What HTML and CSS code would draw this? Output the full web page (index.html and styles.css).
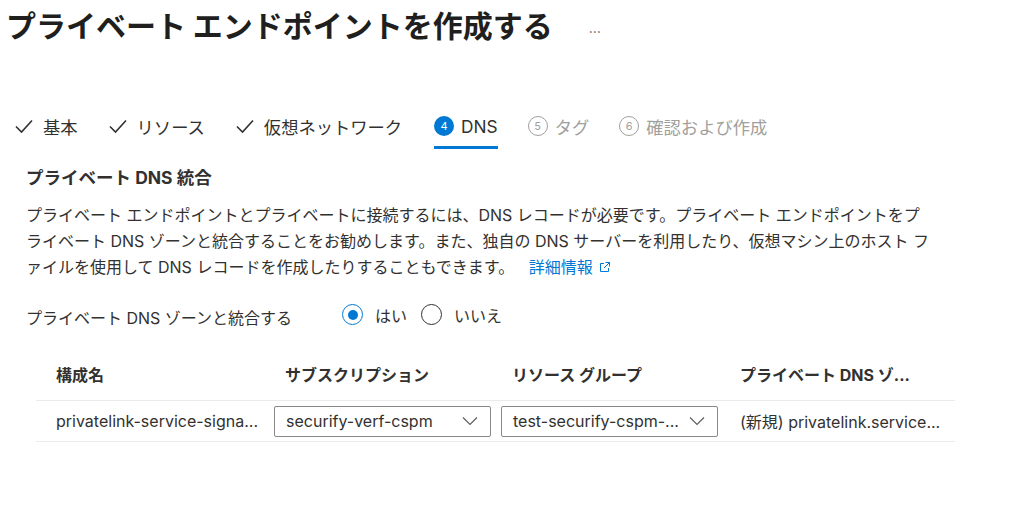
FILE: index.html
```html
<!DOCTYPE html>
<html lang="ja">
<head>
    <meta charset="UTF-8">
    <meta name="viewport" content="width=device-width, initial-scale=1.0">
    <title>プライベート エンドポイントを作成する</title>
    <link rel="stylesheet" href="styles.css">
</head>
<body>
    <div class="header">
        <h1>プライベート エンドポイントを作成する</h1>
        <span class="more">…</span>
    </div>

    <div class="tabs">
        <div class="tab done">
            <svg class="check" viewBox="0 0 20 20"><path d="M2 10.5 L7.5 16 L18 4.5" /></svg>
            <span>基本</span>
        </div>
        <div class="tab done">
            <svg class="check" viewBox="0 0 20 20"><path d="M2 10.5 L7.5 16 L18 4.5" /></svg>
            <span>リソース</span>
        </div>
        <div class="tab done">
            <svg class="check" viewBox="0 0 20 20"><path d="M2 10.5 L7.5 16 L18 4.5" /></svg>
            <span>仮想ネットワーク</span>
        </div>
        <div class="tab active">
            <span class="num">4</span>
            <span>DNS</span>
        </div>
        <div class="tab disabled">
            <span class="num">5</span>
            <span>タグ</span>
        </div>
        <div class="tab disabled">
            <span class="num">6</span>
            <span>確認および作成</span>
        </div>
    </div>

    <div class="section">
        <h2>プライベート DNS 統合</h2>
        <p class="desc">
            プライベート エンドポイントとプライベートに接続するには、DNS レコードが必要です。プライベート エンドポイントをプ<br>
            ライベート DNS ゾーンと統合することをお勧めします。また、独自の DNS サーバーを利用したり、仮想マシン上のホスト フ<br>
            ァイルを使用して DNS レコードを作成したりすることもできます。
            <a class="link" href="#">詳細情報
                <svg class="ext" viewBox="0 0 12 12"><path d="M5 2.5 H1.5 V10.5 H9.5 V7" /><path d="M6.5 1.5 H10.5 V5.5 M10.5 1.5 L5 7" /></svg>
            </a>
        </p>

        <div class="field">
            <span class="label">プライベート DNS ゾーンと統合する</span>
            <div class="radios">
                <label class="radio checked"><span class="dot"></span>はい</label>
                <label class="radio"><span class="dot"></span>いいえ</label>
            </div>
        </div>

        <div class="table">
            <div class="th first">構成名</div>
            <div class="th pad">サブスクリプション</div>
            <div class="th pad">リソース グループ</div>
            <div class="th last">プライベート DNS ゾ...</div>

            <div class="td first">privatelink-service-signa...</div>
            <div class="td">
                <div class="select">
                    <span>securify-verf-cspm</span>
                    <svg class="chev" viewBox="0 0 16 10"><path d="M1 1.5 L8 8.5 L15 1.5" /></svg>
                </div>
            </div>
            <div class="td">
                <div class="select">
                    <span>test-securify-cspm-...</span>
                    <svg class="chev" viewBox="0 0 16 10"><path d="M1 1.5 L8 8.5 L15 1.5" /></svg>
                </div>
            </div>
            <div class="td last">(新規) privatelink.service...</div>
        </div>
    </div>
</body>
</html>
```

FILE: styles.css
```css
body {
    font-family: Inter, "Noto Sans CJK JP", sans-serif;
    color: #323130;
    background: #fff;
    margin: 0;
    padding: 0;
}
.header {
    display: flex;
    align-items: center;
    height: 48px;
    padding-left: 6px;
}
h1 {
    font-family: "Noto Sans CJK JP", sans-serif;
    font-size: 30px;
    font-weight: 700;
    margin: 0;
    color: #201f1e;
}
.more {
    margin-left: 36px;
    font-size: 14px;
    color: #605e5c;
    padding-top: 6px;
}
.tabs {
    display: flex;
    align-items: stretch;
    margin-top: 58px;
    padding-left: 14px;
    gap: 30px;
}
.tab {
    display: flex;
    align-items: center;
    gap: 6px;
    height: 43px;
    font-size: 17.3px;
    border-bottom: 3px solid transparent;
    box-sizing: border-box;
}
.tab .check {
    width: 20px;
    height: 20px;
    margin-right: 3px;
}
.check path {
    fill: none;
    stroke: #323130;
    stroke-width: 1.6;
}
.tab .num {
    display: inline-flex;
    align-items: center;
    justify-content: center;
    width: 20px;
    height: 20px;
    border-radius: 50%;
    font-size: 11px;
    box-sizing: border-box;
    margin-right: 1px;
}
.tab.active {
    border-bottom-color: #0078d4;
    margin-left: 2px;
}
.tab.active .num {
    background: #0078d4;
    color: #fff;
}
.tab.disabled {
    color: #a19f9d;
}
.tab.disabled .num {
    border: 1px solid #a19f9d;
}
.section {
    padding-left: 26px;
}
h2 {
    font-family: Inter, "Noto Sans CJK JP", sans-serif;
    font-size: 17.5px;
    font-weight: 700;
    margin: 17px 0 0;
    line-height: 24px;
}
.desc {
    font-size: 16px;
    line-height: 26px;
    margin: 12px 0 0;
    white-space: nowrap;
}
.link {
    color: #0078d4;
    text-decoration: none;
    margin-left: 10px;
}
.ext {
    width: 12px;
    height: 12px;
    margin-left: 2px;
}
.ext path {
    fill: none;
    stroke: #0078d4;
    stroke-width: 1;
}
.field {
    display: flex;
    align-items: center;
    margin-top: 20px;
    font-size: 16px;
}
.label {
    width: 316px;
    padding-top: 5px;
}
.radios {
    display: flex;
    gap: 14px;
}
.radio {
    display: flex;
    align-items: center;
    gap: 12px;
}
.dot {
    width: 21px;
    height: 21px;
    border: 1px solid #323130;
    border-radius: 50%;
    box-sizing: border-box;
    position: relative;
}
.radio.checked .dot {
    border-color: #0078d4;
}
.radio.checked .dot::after {
    content: "";
    position: absolute;
    left: 4.5px;
    top: 4.5px;
    width: 10px;
    height: 10px;
    border-radius: 50%;
    background: #0078d4;
}
.table {
    display: grid;
    grid-template-columns: 228px 227px 237px 227px;
    margin: 28px 0 0 10px;
    font-size: 16px;
}
.th {
    font-weight: 700;
    height: 44px;
    display: flex;
    align-items: center;
    padding-bottom: 10px;
    box-sizing: border-box;
    border-bottom: 1px solid #edebe9;
}
.th.first {
    padding-left: 20px;
}
.th.pad {
    padding-left: 21px;
}
.th.last {
    padding-left: 12px;
}
.td {
    height: 40px;
    display: flex;
    align-items: center;
    padding-left: 10px;
    border-bottom: 1px solid #edebe9;
}
.td.first {
    padding-left: 20px;
}
.td.last {
    padding-left: 12px;
}
.select {
    display: flex;
    align-items: center;
    justify-content: space-between;
    width: 217px;
    height: 31px;
    border: 1px solid #8a8886;
    border-radius: 2px;
    box-sizing: border-box;
    padding: 0 12px 0 11px;
}
.chev {
    width: 16px;
    height: 10px;
}
.chev path {
    fill: none;
    stroke: #605e5c;
    stroke-width: 1.2;
}
```
